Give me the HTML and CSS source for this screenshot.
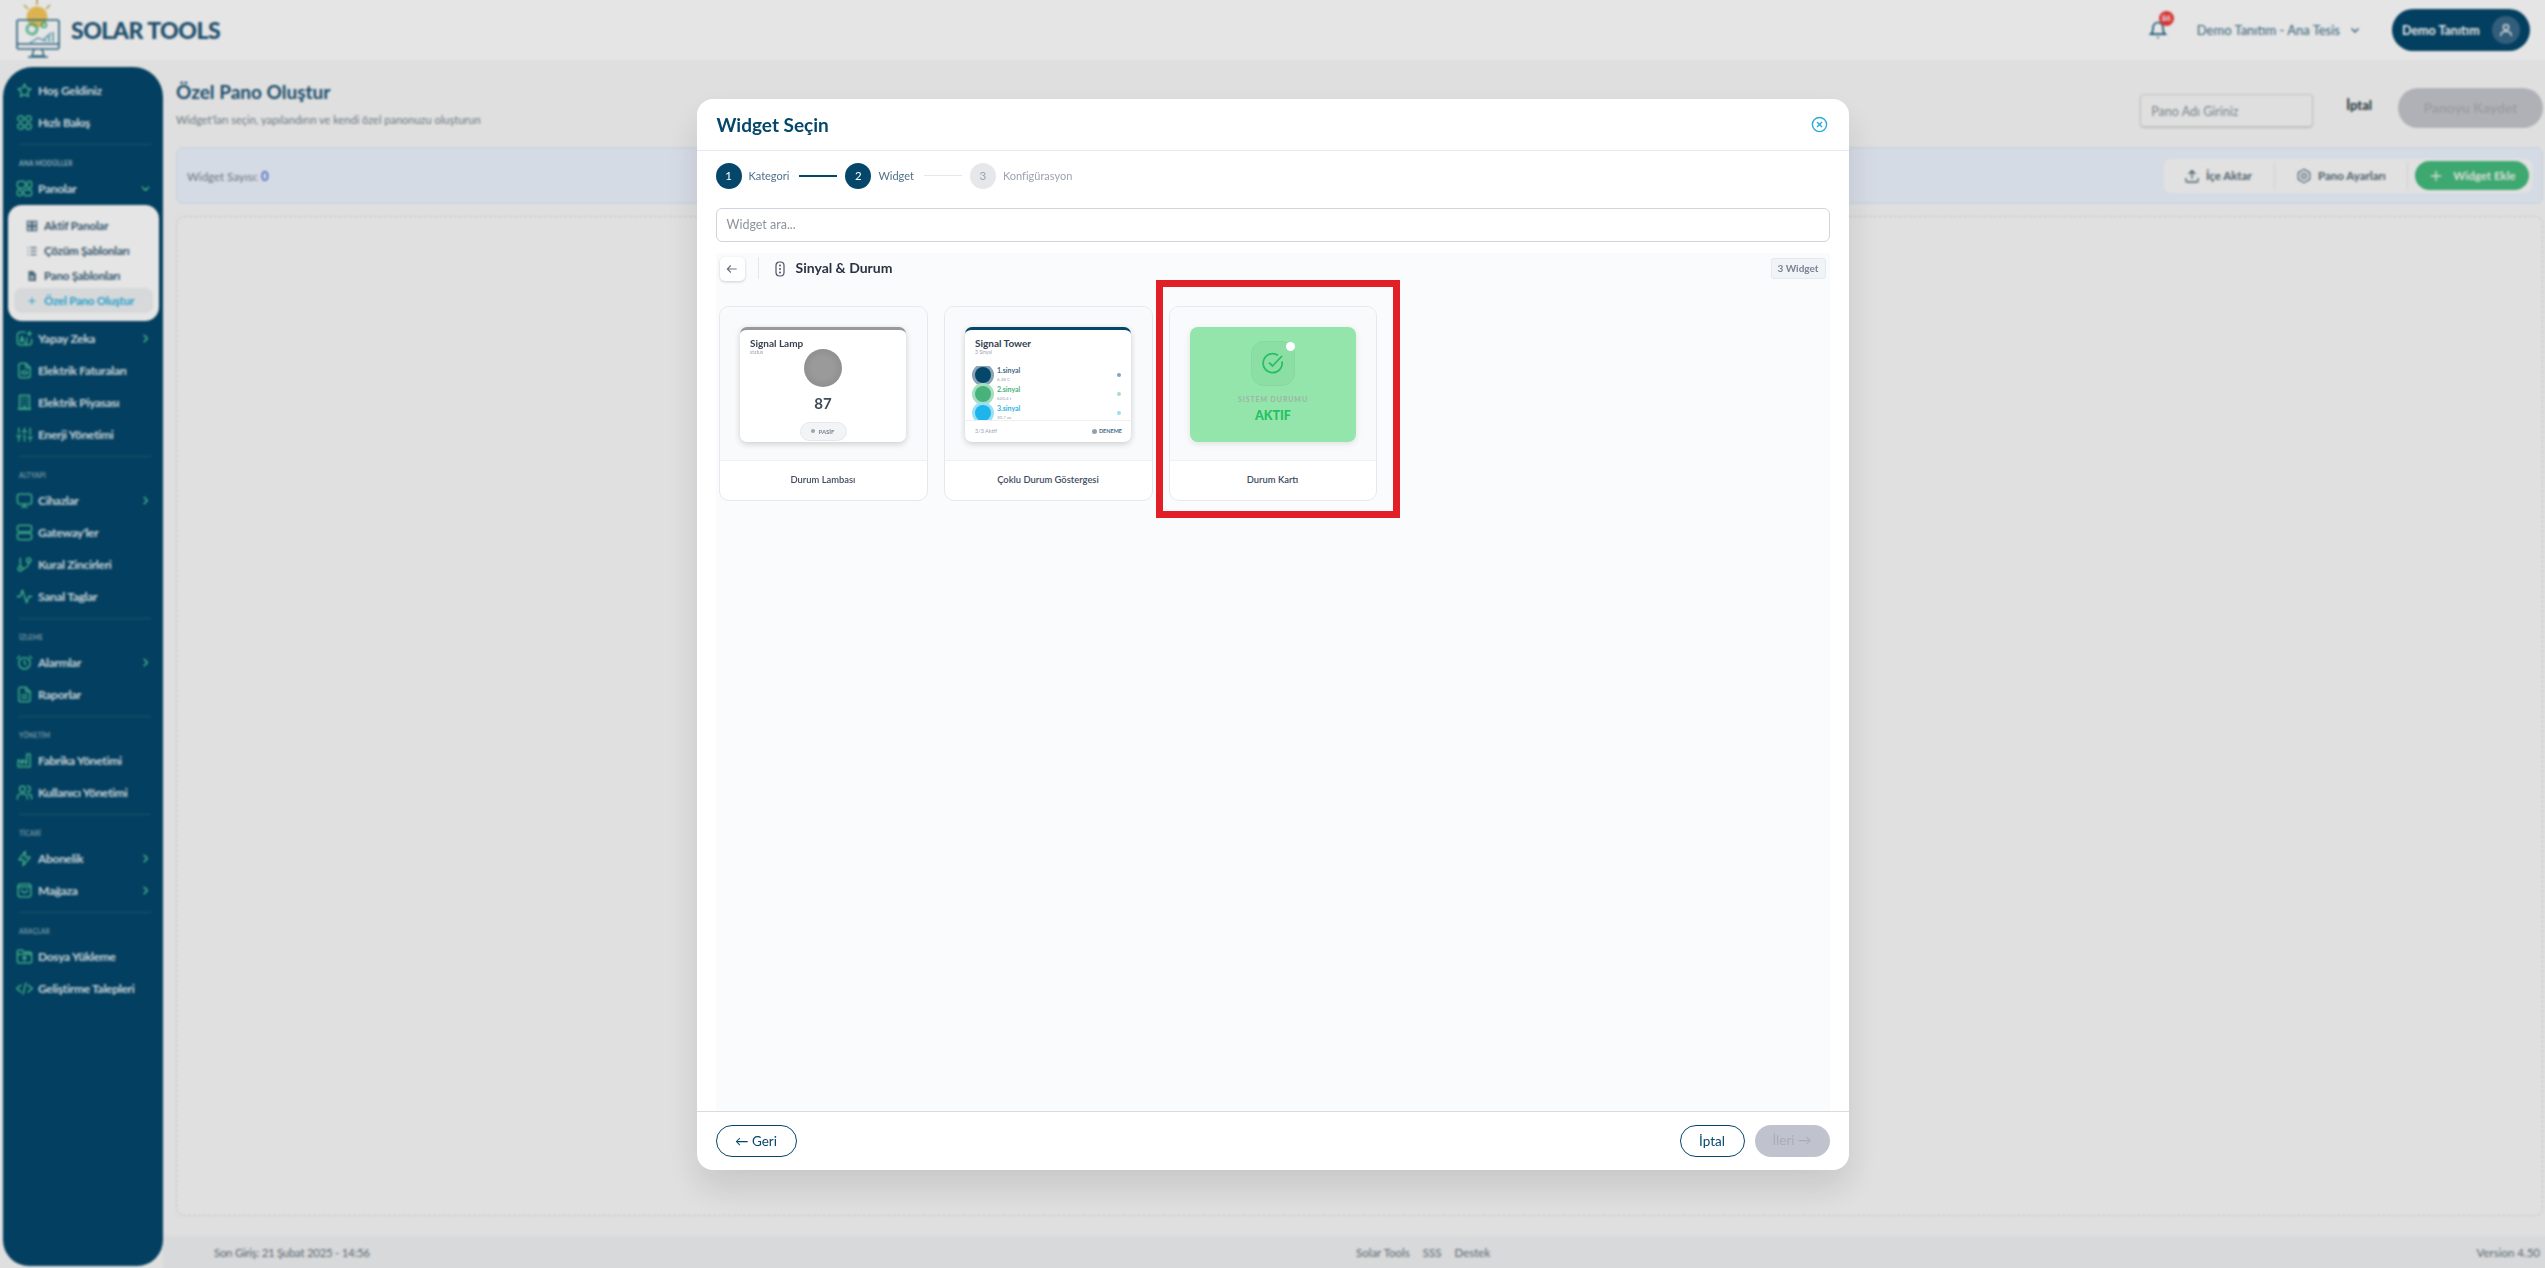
FILE: index.html
```html
<!DOCTYPE html>
<html lang="tr">
<head>
    <meta charset="UTF-8">
    <meta name="viewport" content="width=device-width, initial-scale=1.0">
    <title>Solar Tools - Özel Pano Oluştur</title>
    <link rel="stylesheet" href="styles.css">
</head>
<body>
    <header class="topbar">
        <div class="brand">
            <svg class="brand-logo" viewBox="0 0 64 60" fill="none">
                <g stroke="#c9a84a" stroke-width="1.4"><path d="M37 0v5M24 5l4 4M50 5l-4 4"/></g>
                <circle cx="37" cy="17" r="10.5" fill="#f4c95a"/>
                <rect x="17" y="20" width="42" height="29" rx="2" stroke="#2f6f8c" stroke-width="1.6"/>
                <path d="M17 44h42M34 49l-2 7h12l-2-7M28 57h20" stroke="#2f6f8c" stroke-width="1.5"/>
                <circle cx="32" cy="29" r="5" stroke="#3fb58a" stroke-width="3" stroke-dasharray="2 .8"/>
                <circle cx="44" cy="25" r="2.5" stroke="#3fb58a" stroke-width="1.5"/>
                <path d="M30 43l8-5 5 2 8-7" stroke="#5d9ab0" stroke-width="1.3"/>
                <path d="M45 42v-4M49 42v-7M53 42v-10" stroke="#7fb8c9" stroke-width="2"/>
            </svg>
            <span class="brand-name">SOLAR TOOLS</span>
        </div>
        <div class="topbar-right">
            <div class="bell">
                <svg class="ico-18" viewBox="0 0 24 24" fill="none" stroke="currentColor" stroke-width="2"><path d="M6 9a6 6 0 0 1 12 0c0 6 2.5 8 2.5 8h-17S6 15 6 9z"/><path d="M11 21h2"/></svg>
                <span class="bell-badge">86</span>
            </div>
            <div class="plant">Demo Tanıtım - Ana Tesis
                <svg class="ico-12" viewBox="0 0 24 24" fill="none" stroke="currentColor" stroke-width="3"><path d="M5 9l7 7 7-7"/></svg>
            </div>
            <div class="user">
                <span>Demo Tanıtım</span>
                <span class="user-avatar"><svg class="ico-16" viewBox="0 0 24 24" fill="none" stroke="currentColor" stroke-width="2"><circle cx="12" cy="8" r="4"/><path d="M4 21c0-5 3-7 8-7s8 2 8 7"/></svg></span>
            </div>
        </div>
    </header>

    <div class="layout">
        <aside class="sidebar">
            <a class="nav-item"><svg viewBox="0 0 24 24"><path d="M12 3l2.800 5.800 6.200.9-4.500 4.400 1.100 6.300L12 17.500l-5.600 2.900 1.100-6.300L3 9.700l6.200-.9z"/></svg>Hoş Geldiniz</a>
            <a class="nav-item"><svg viewBox="0 0 24 24"><circle cx="6.5" cy="6.5" r="4"/><circle cx="17.5" cy="6.5" r="4"/><circle cx="6.5" cy="17.5" r="4"/><circle cx="17.5" cy="17.5" r="4"/></svg>Hızlı Bakış</a>

            <div class="nav-label nav-label-strong">ANA MODÜLLER</div>
            <a class="nav-item"><svg viewBox="0 0 24 24"><rect x="2" y="2" width="11" height="9" rx="2"/><rect x="16" y="2" width="6" height="9" rx="2"/><rect x="2" y="14" width="6" height="8" rx="2"/><rect x="11" y="14" width="11" height="8" rx="2"/></svg>Panolar<svg class="nav-arrow" viewBox="0 0 24 24"><path d="M5 9l7 7 7-7"/></svg></a>
            <div class="subnav">
                <a class="subnav-item"><svg viewBox="0 0 24 24" fill="none" stroke="currentColor" stroke-width="3"><path d="M3 3h8v8H3zM13 3h8v8h-8zM3 13h8v8H3zM13 13h8v8h-8z"/></svg>Aktif Panolar</a>
                <a class="subnav-item"><svg viewBox="0 0 24 24" fill="none" stroke="currentColor" stroke-width="2.5"><path d="M3 5h2M9 5h12M3 12h2M9 12h12M3 19h2M9 19h12"/></svg>Çözüm Şablonları</a>
                <a class="subnav-item"><svg viewBox="0 0 24 24" fill="currentColor"><path d="M5 2h9l6 6v14H5zM8 12v2h8v-2zM8 16v2h8v-2z"/></svg>Pano Şablonları</a>
                <a class="subnav-item subnav-active"><svg viewBox="0 0 24 24" fill="none" stroke="currentColor" stroke-width="2"><path d="M12 5v14M5 12h14"/></svg>Özel Pano Oluştur</a>
            </div>
            <a class="nav-item"><svg viewBox="0 0 24 24"><path d="M13 3H6a4 4 0 0 0-4 4v10a4 4 0 0 0 4 4h12a4 4 0 0 0 4-4v-4"/><path d="M6 17l2.500-8 2.500 8M7 14.500h3M15 11v6c0 2-1 2.500-2 2.500"/><path d="M19 2v6M16 5h6"/></svg>Yapay Zeka<svg class="nav-arrow" viewBox="0 0 24 24"><path d="M9 5l7 7-7 7"/></svg></a>
            <a class="nav-item"><svg viewBox="0 0 24 24"><path d="M14 2H7a3 3 0 0 0-3 3v14a3 3 0 0 0 3 3h10a3 3 0 0 0 3-3V8z"/><path d="M14 2v6h6"/><rect x="8" y="13" width="8" height="4" rx="2"/></svg>Elektrik Faturaları</a>
            <a class="nav-item"><svg viewBox="0 0 24 24"><rect x="5" y="2" width="14" height="19"/><path d="M3 21h18M9 6h1M14 6h1M9 10h1M14 10h1M9 14h1M14 14h1M10 18h4"/></svg>Elektrik Piyasası</a>
            <a class="nav-item"><svg viewBox="0 0 24 24"><path d="M4 21v-7M4 10V3M12 21v-9M12 8V3M20 21v-5M20 12V3M1 14h6M9 8h6M17 16h6"/></svg>Enerji Yönetimi</a>

            <div class="nav-label">ALTYAPI</div>
            <a class="nav-item"><svg viewBox="0 0 24 24"><rect x="2" y="3" width="20" height="14" rx="3"/><path d="M12 17v4M8 21h8"/></svg>Cihazlar<svg class="nav-arrow" viewBox="0 0 24 24"><path d="M9 5l7 7-7 7"/></svg></a>
            <a class="nav-item"><svg viewBox="0 0 24 24"><rect x="2" y="2" width="20" height="9" rx="3"/><rect x="2" y="13" width="20" height="9" rx="3"/></svg>Gateway'ler</a>
            <a class="nav-item"><svg viewBox="0 0 24 24"><circle cx="18" cy="6" r="3"/><circle cx="6" cy="18" r="3"/><path d="M6 3v12M18 9a9 9 0 0 1-9 9"/></svg>Kural Zincirleri</a>
            <a class="nav-item"><svg viewBox="0 0 24 24"><path d="M2 12h4l3-9 6 18 3-9h4"/></svg>Sanal Taglar</a>

            <div class="nav-label">İZLEME</div>
            <a class="nav-item"><svg viewBox="0 0 24 24"><circle cx="12" cy="13" r="8"/><path d="M12 9v4l2 2M5 3L2 6M22 6l-3-3"/></svg>Alarmlar<svg class="nav-arrow" viewBox="0 0 24 24"><path d="M9 5l7 7-7 7"/></svg></a>
            <a class="nav-item"><svg viewBox="0 0 24 24"><path d="M14 2H6a2 2 0 0 0-2 2v16a2 2 0 0 0 2 2h12a2 2 0 0 0 2-2V8z"/><path d="M14 2v6h6M8 13h8M8 17h8"/></svg>Raporlar</a>

            <div class="nav-label">YÖNETİM</div>
            <a class="nav-item"><svg viewBox="0 0 24 24"><path d="M3 21V11l6 4v-4l6 4V3h5v18zM7 17h2M13 17h2"/></svg>Fabrika Yönetimi</a>
            <a class="nav-item"><svg viewBox="0 0 24 24"><circle cx="9" cy="7" r="4"/><path d="M2 21v-2a5 5 0 0 1 5-5h4a5 5 0 0 1 5 5v2M16 3a4 4 0 0 1 0 8M22 21v-2a5 5 0 0 0-4-5"/></svg>Kullanıcı Yönetimi</a>

            <div class="nav-label">TİCARİ</div>
            <a class="nav-item"><svg viewBox="0 0 24 24"><path d="M13 2L4 14h7l-1 8 10-12h-7z"/></svg>Abonelik<svg class="nav-arrow" viewBox="0 0 24 24"><path d="M9 5l7 7-7 7"/></svg></a>
            <a class="nav-item"><svg viewBox="0 0 24 24"><rect x="3" y="3" width="18" height="18" rx="3"/><path d="M3 7h18M8 11a4 4 0 0 0 8 0"/></svg>Mağaza<svg class="nav-arrow" viewBox="0 0 24 24"><path d="M9 5l7 7-7 7"/></svg></a>

            <div class="nav-label">ARAÇLAR</div>
            <a class="nav-item"><svg viewBox="0 0 24 24"><path d="M2 19V5a2 2 0 0 1 2-2h5l2 3h9a2 2 0 0 1 2 2v11a2 2 0 0 1-2 2H4a2 2 0 0 1-2-2zM2 9h20M12 18v-6M9.500 14.500L12 12l2.500 2.500"/></svg>Dosya Yükleme</a>
            <a class="nav-item"><svg viewBox="0 0 24 24"><path d="M7 7l-6 5 6 5M17 7l6 5-6 5M14 4l-4 16"/></svg>Geliştirme Talepleri</a>
        </aside>

        <div class="content">
            <main class="page">
                <div class="page-head">
                    <div>
                        <h1>Özel Pano Oluştur</h1>
                        <p>Widget'ları seçin, yapılandırın ve kendi özel panonuzu oluşturun</p>
                    </div>
                    <div class="page-actions">
                        <div class="name-input">Pano Adı Giriniz</div>
                        <span class="link-cancel">İptal</span>
                        <span class="save-btn">Panoyu Kaydet</span>
                    </div>
                </div>
                <div class="band">
                    <div class="band-count">Widget Sayısı: <b>0</b></div>
                    <div class="toolbar">
                        <span class="tool"><svg class="ico-16" viewBox="0 0 24 24" fill="none" stroke="currentColor" stroke-width="2"><path d="M12 16V4M7 9l5-5 5 5M3 15v4a2 2 0 0 0 2 2h14a2 2 0 0 0 2-2v-4"/></svg>İçe Aktar</span>
                        <span class="tool tool-sep"><svg class="ico-16" viewBox="0 0 24 24" fill="none" stroke="currentColor" stroke-width="1.8"><path d="M12 2l8.500 5v10L12 22l-8.500-5V7z"/><circle cx="12" cy="12" r="3.5"/></svg>Pano Ayarları</span>
                        <span class="add-btn"><svg class="ico-16" viewBox="0 0 24 24" fill="none" stroke="currentColor" stroke-width="2"><path d="M12 4v16M4 12h16"/></svg>Widget Ekle</span>
                    </div>
                </div>
                <div class="canvas"></div>
            </main>
            <footer class="statusbar">
                <span class="status-date">Son Giriş: 21 Şubat 2025 - 14:56</span>
                <span class="status-links"><span>Solar Tools</span><span>SSS</span><span>Destek</span></span>
                <span>Version 4.50</span>
            </footer>
        </div>
    </div>

    <div class="overlay">
        <section class="modal">
            <div class="modal-head">
                <h2>Widget Seçin</h2>
                <svg class="modal-close" viewBox="0 0 24 24" fill="none" stroke="currentColor" stroke-width="2"><circle cx="12" cy="12" r="10"/><path d="M8.500 8.500l7 7M15.500 8.500l-7 7"/></svg>
            </div>
            <div class="modal-body">
                <div class="steps">
                    <span class="step-num">1</span><span class="step-text">Kategori</span><span class="step-line step-line-done"></span>
                    <span class="step-num">2</span><span class="step-text">Widget</span><span class="step-line"></span>
                    <span class="step-num step-num-off">3</span><span class="step-text step-text-off">Konfigürasyon</span>
                </div>
                <div class="search">Widget ara...</div>
                <div class="panel">
                    <div class="panel-head">
                        <span class="back-btn"><svg class="ico-14" viewBox="0 0 24 24" fill="none" stroke="currentColor" stroke-width="2"><path d="M20 12H4M10 6l-6 6 6 6"/></svg></span>
                        <span class="panel-sep"></span>
                        <svg class="panel-ico" viewBox="0 0 10 16" fill="none"><rect x="1" y="1" width="8" height="14" rx="3.5" stroke="currentColor" stroke-width="1.2"/><circle cx="5" cy="4.5" r="1" fill="currentColor"/><circle cx="5" cy="8" r="1" fill="currentColor"/><circle cx="5" cy="11.5" r="1" fill="currentColor"/></svg>
                        <h3>Sinyal &amp; Durum</h3>
                        <span class="panel-badge">3 Widget</span>
                    </div>
                    <div class="widget-grid">
                        <article class="widget-card">
                            <div class="widget-thumb">
                                <div class="lamp">
                                    <div class="prev-title">Signal Lamp</div>
                                    <div class="prev-sub">status</div>
                                    <div class="lamp-circle"></div>
                                    <div class="lamp-value">87</div>
                                    <div class="lamp-pill"><i></i>PASİF</div>
                                </div>
                            </div>
                            <div class="widget-name">Durum Lambası</div>
                        </article>
                        <article class="widget-card">
                            <div class="widget-thumb">
                                <div class="tower">
                                    <div class="prev-title">Signal Tower</div>
                                    <div class="prev-sub">3 Sinyal</div>
                                    <div class="tower-rows">
                                        <div class="tower-row tone-navy"><i class="tower-light"></i><div><b>1.sinyal</b><small>6.28 C</small></div><i class="tower-dot"></i></div>
                                        <div class="tower-row tone-green"><i class="tower-light"></i><div><b>2.sinyal</b><small>620.4 t</small></div><i class="tower-dot"></i></div>
                                        <div class="tower-row tone-blue"><i class="tower-light"></i><div><b>3.sinyal</b><small>20.7 oc</small></div><i class="tower-dot"></i></div>
                                    </div>
                                    <div class="tower-foot"><span>3/3 Aktif</span><span class="tower-tag"><i></i>DENEME</span></div>
                                </div>
                            </div>
                            <div class="widget-name">Çoklu Durum Göstergesi</div>
                        </article>
                        <article class="widget-card">
                            <div class="widget-thumb">
                                <div class="status-card">
                                    <div class="status-icon">
                                        <svg viewBox="0 0 24 24" fill="none" stroke="currentColor" stroke-width="1.8"><path d="M21 10.500a9.500 9.500 0 1 1-4-6.200"/><path d="M8 11.500l3.500 3.500L21 5"/></svg>
                                        <i></i>
                                    </div>
                                    <div class="status-label">SISTEM DURUMU</div>
                                    <div class="status-value">AKTIF</div>
                                </div>
                            </div>
                            <div class="widget-name">Durum Kartı</div>
                            <span class="red-mark"></span>
                        </article>
                    </div>
                </div>
            </div>
            <div class="modal-foot">
                <span class="btn-outline btn-back">← Geri</span>
                <span class="foot-right">
                    <span class="btn-outline btn-cancel">İptal</span>
                    <span class="btn-disabled">İleri →</span>
                </span>
            </div>
        </section>
    </div>
</body>
</html>
```

FILE: styles.css
```css
* {
    box-sizing: border-box;
}

html, body {
    height: 100%;
}

body {
    margin: 0;
    overflow: hidden;
    font-family: "Lato", "Noto Sans", sans-serif;
    background-color: #f9f9f9;
    color: #1f3a4d;
}

h1, h2, h3, p {
    margin: 0;
}

.ico-12 { width: 12px; height: 12px; }
.ico-14 { width: 14px; height: 14px; }
.ico-16 { width: 16px; height: 16px; }
.ico-18 { width: 20px; height: 20px; }

/* barra superior */
.topbar {
    height: 60px;
    background-color: #fff;
    display: flex;
    justify-content: space-between;
    align-items: center;
    padding-right: 15px;
}

.brand {
    display: flex;
    align-items: center;
    gap: 7px;
}

.brand-logo {
    width: 64px;
    height: 60px;
}

.brand-name {
    font-size: 23px;
    font-weight: 900;
    color: #1f5778;
    letter-spacing: -0.5px;
}

.topbar-right {
    display: flex;
    align-items: center;
}

.bell {
    position: relative;
    display: flex;
    color: #1d5f80;
    margin-right: 29px;
}

.bell-badge {
    position: absolute;
    top: -9px;
    right: -6px;
    width: 15px;
    height: 15px;
    border-radius: 50%;
    background-color: #ef3b3b;
    color: #fff;
    font-size: 8px;
    font-weight: 700;
    text-align: center;
    line-height: 15px;
}

.plant {
    display: flex;
    align-items: center;
    gap: 9px;
    font-size: 13px;
    color: #3d6f88;
    margin-right: 31px;
}

.user {
    width: 138px;
    height: 42px;
    border-radius: 21px;
    background-color: #04476b;
    color: #fff;
    font-size: 12.5px;
    font-weight: 700;
    display: flex;
    align-items: center;
    justify-content: space-between;
    padding: 0 10px;
}

.user-avatar {
    width: 28px;
    height: 28px;
    border-radius: 50%;
    background-color: #39698a;
    display: flex;
    align-items: center;
    justify-content: center;
}

/* estrutura */
.layout {
    height: 1208px;
    display: flex;
}

.sidebar {
    width: 160px;
    height: 1199px;
    margin: 7px 0 0 3px;
    padding-top: 7px;
    background-color: #04476b;
    border-radius: 30px 30px 26px 26px;
    flex-shrink: 0;
}

.nav-item {
    height: 32px;
    display: flex;
    align-items: center;
    padding-left: 13px;
    padding-right: 12px;
    font-size: 12px;
    font-weight: 700;
    letter-spacing: -0.3px;
    color: #dfe8ee;
}

.nav-item svg {
    width: 17px;
    height: 17px;
    margin-right: 5px;
    flex-shrink: 0;
    fill: none;
    stroke: #4fd09c;
    stroke-width: 1.8;
    stroke-linecap: round;
    stroke-linejoin: round;
}

.nav-item .nav-arrow {
    width: 11px;
    height: 11px;
    margin-left: auto;
    margin-right: 0;
    stroke-width: 3;
}

.nav-label {
    height: 28px;
    margin: 6px 12px 0 16px;
    padding-top: 14px;
    border-top: 1px solid #205c7d;
    font-size: 6.5px;
    line-height: 10px;
    font-weight: 700;
    color: #7fa7ba;
    letter-spacing: 0.2px;
}

.nav-label-strong {
    color: #9fc0cf;
}

.subnav {
    width: 151px;
    height: 116px;
    margin: 1px 0 1px 5px;
    padding: 8px 6px;
    background-color: #fff;
    border-radius: 14px;
}

.subnav-item {
    height: 25px;
    display: flex;
    align-items: center;
    padding-left: 12px;
    border-radius: 8px;
    font-size: 11.5px;
    font-weight: 700;
    letter-spacing: -0.2px;
    color: #3d6379;
}

.subnav-item svg {
    width: 12px;
    height: 12px;
    margin-right: 6px;
    color: #56778b;
}

.subnav-active {
    background-color: #f0f1f3;
    color: #2db4e2;
}

.subnav-active svg {
    color: #2db4e2;
}

.content {
    flex: 1;
    display: flex;
    flex-direction: column;
    min-width: 0;
}

.page {
    flex: 1;
    padding: 17px 2px 0 13px;
}

.page-head {
    height: 70px;
    display: flex;
    justify-content: space-between;
}

.page-head h1 {
    font-size: 19px;
    font-weight: 700;
    color: #1c5577;
    line-height: 30px;
}

.page-head p {
    font-size: 11px;
    color: #7a8a94;
    margin-top: 6px;
}

.page-actions {
    display: flex;
    align-items: flex-start;
    margin-top: 11px;
}

.name-input {
    width: 173px;
    height: 33px;
    margin-top: 6px;
    margin-right: 33px;
    padding: 9px 10px;
    font-size: 12.5px;
    color: #8b949b;
    border: 1px solid #d4d6d8;
    border-radius: 4px;
    box-shadow: 0 1px 2px rgba(0, 0, 0, 0.15);
}

.link-cancel {
    font-size: 13px;
    font-weight: 700;
    color: #25353f;
    margin-top: 9px;
    margin-right: 26px;
}

.save-btn {
    width: 145px;
    height: 40px;
    border-radius: 20px;
    background-color: #c4c6cc;
    color: #aeb0b7;
    font-size: 14px;
    font-weight: 700;
    text-align: center;
    line-height: 40px;
}

.band {
    height: 57px;
    background-color: #eef4ff;
    border: 1px solid #dce8f7;
    border-radius: 7px;
    display: flex;
    justify-content: space-between;
    align-items: center;
    padding: 0 10px;
}

.band-count {
    font-size: 11.5px;
    color: #7a8790;
}

.band-count b {
    color: #5a78d8;
    font-size: 13px;
}

.toolbar {
    width: 368px;
    height: 34px;
    background-color: #fbfbfb;
    border-radius: 7px;
    display: flex;
    align-items: center;
    padding: 0 3px 0 20px;
    font-size: 11.5px;
    font-weight: 700;
    color: #566b78;
}

.tool {
    display: flex;
    align-items: center;
    gap: 6px;
    width: 90px;
    flex-shrink: 0;
}

.tool svg {
    flex-shrink: 0;
}

.tool-sep {
    width: 134px;
    height: 28px;
    padding-left: 21px;
    border-left: 1px solid #e7e7e7;
    border-right: 1px solid #e7e7e7;
}

.add-btn {
    width: 114px;
    height: 29px;
    margin-left: 7px;
    flex-shrink: 0;
    border-radius: 15px;
    background-color: #45bb7c;
    color: #f2f7f3;
    display: flex;
    align-items: center;
    justify-content: center;
    gap: 9px;
}

.canvas {
    height: 1000px;
    margin-top: 12px;
    border: 1px dashed #d6d6d6;
    border-radius: 8px;
    background-color: #fafafa;
}

.statusbar {
    height: 32px;
    background-color: #f1f2f3;
    display: flex;
    justify-content: space-between;
    align-items: center;
    padding: 0 5px 0 51px;
    font-size: 11.5px;
    color: #65757f;
}

.status-date {
    letter-spacing: -0.3px;
}

.status-links {
    display: flex;
    gap: 13px;
}

/* modal */
.overlay {
    position: fixed;
    inset: 0;
    background-color: rgba(0, 0, 0, 0.1);
    backdrop-filter: blur(1px);
    display: flex;
    align-items: center;
    justify-content: center;
}

.modal {
    width: 1152px;
    height: 1071px;
    background-color: #fff;
    border-radius: 16px;
    box-shadow: 0 18px 36px rgba(0, 0, 0, 0.12);
    display: flex;
    flex-direction: column;
    color: #04476b;
}

.modal-head {
    height: 52px;
    padding: 0 21px 0 20px;
    border-bottom: 1px solid #e4eaee;
    display: flex;
    align-items: center;
    justify-content: space-between;
    flex-shrink: 0;
}

.modal-head h2 {
    font-size: 19px;
    font-weight: 700;
}

.modal-close {
    width: 17px;
    height: 17px;
    color: #2aabdc;
}

.modal-body {
    flex: 1;
    padding: 0 19px;
    display: flex;
    flex-direction: column;
    min-height: 0;
}

.steps {
    height: 50px;
    margin-bottom: 7px;
    flex-shrink: 0;
    display: flex;
    align-items: center;
    font-size: 11px;
}

.step-num {
    width: 26px;
    height: 26px;
    border-radius: 50%;
    background-color: #04476b;
    color: #fff;
    font-size: 11.5px;
    text-align: center;
    line-height: 26px;
}

.step-num-off {
    background-color: #e5e7eb;
    color: #9ca3af;
}

.step-text {
    margin-left: 7px;
    color: #4e718a;
}

.step-text-off {
    color: #9ca3af;
}

.step-line {
    width: 38px;
    height: 1px;
    margin: 0 8px 0 10px;
    background-color: #e5e7eb;
}

.step-line-done {
    height: 2px;
    background-color: #04476b;
}

.search {
    height: 34px;
    flex-shrink: 0;
    border: 1px solid #d1d5db;
    border-radius: 6px;
    padding-left: 10px;
    font-size: 12.5px;
    line-height: 32px;
    color: #8d949c;
}

.panel {
    flex: 1;
    margin-top: 11px;
    padding: 3px 3px 0;
    background-color: #f9fbfd;
}

.panel-head {
    height: 50px;
    display: flex;
    align-items: flex-start;
    padding-top: 1px;
}

.back-btn {
    width: 25px;
    height: 24px;
    margin-left: 1px;
    background-color: #fff;
    border-radius: 5px;
    box-shadow: 0 1px 3px rgba(0, 0, 0, 0.18);
    display: flex;
    align-items: center;
    justify-content: center;
    color: #6b7280;
}

.panel-sep {
    width: 1px;
    height: 22px;
    margin: 0 16px 0 13px;
    background-color: #e5e7eb;
}

.panel-ico {
    width: 10px;
    height: 16px;
    margin-top: 4px;
    color: #4b5563;
}

.panel-head h3 {
    font-size: 14px;
    font-weight: 700;
    color: #2b3242;
    margin-left: 11px;
    line-height: 22px;
}

.panel-badge {
    margin-left: auto;
    margin-top: 1px;
    margin-right: 1px;
    width: 55px;
    height: 21px;
    background-color: #f1f4f7;
    border: 1px solid #e5e8ec;
    border-radius: 3px;
    font-size: 10px;
    font-weight: 700;
    text-align: center;
    line-height: 19px;
    color: #7a8294;
}

.widget-grid {
    display: grid;
    grid-template-columns: 209px 209px 208px;
    gap: 16px;
}

.widget-card {
    position: relative;
    height: 195px;
    background-color: #fff;
    border: 1px solid #e5e8ec;
    border-radius: 10px;
}

.widget-thumb {
    height: 154px;
    background-color: #f8fafc;
    border-bottom: 1px solid #eef1f4;
    border-radius: 10px 10px 0 0;
    padding: 20px 0 0 20.5px;
}

.widget-name {
    height: 39px;
    font-size: 9.4px;
    font-weight: 600;
    color: #414b5f;
    text-align: center;
    line-height: 38px;
}

.red-mark {
    position: absolute;
    top: -27px;
    left: -14px;
    right: -24px;
    bottom: -18px;
    border: 7px solid #e21f26;
}

.prev-title {
    font-size: 10px;
    font-weight: 700;
    color: #374151;
    line-height: 12px;
}

.prev-sub {
    font-size: 5px;
    color: #9ca3af;
    line-height: 7px;
}

/* previa: lampada */
.lamp,
.tower {
    width: 166px;
    height: 115px;
    background-color: #fff;
    border-radius: 7px;
    box-shadow: 0 2px 6px rgba(0, 0, 0, 0.18);
    position: relative;
    overflow: hidden;
}

.lamp {
    border-top: 3px solid #999;
    padding: 7px 10px 0;
}

.lamp-circle {
    width: 38px;
    height: 38px;
    margin: -7px auto 0;
    border-radius: 50%;
    background: radial-gradient(circle, #9a9a9a 40%, #858585 100%);
}

.lamp-value {
    font-size: 15px;
    font-weight: 700;
    color: #414a58;
    text-align: center;
    margin-top: 7px;
    line-height: 18px;
}

.lamp-pill {
    width: 47px;
    height: 19px;
    margin: 10px auto 0;
    background-color: #f3f4f6;
    border: 1px solid #e5e7eb;
    border-radius: 10px;
    font-size: 6px;
    font-weight: 700;
    color: #7b8494;
    display: flex;
    align-items: center;
    justify-content: center;
    gap: 3px;
}

.lamp-pill i {
    width: 4px;
    height: 4px;
    border-radius: 50%;
    background-color: #9ca3af;
}

/* previa: torre */
.tower {
    border-top: 3px solid #04476b;
    padding: 7px 0 0;
}

.tower .prev-title,
.tower .prev-sub {
    padding-left: 10px;
}

.tower-rows {
    height: 54px;
    margin-top: 10px;
    overflow: hidden;
}

.tower-row {
    height: 19px;
    display: flex;
    align-items: center;
    padding: 0 10px;
    font-size: 7px;
    line-height: 9px;
}

.tower-row b {
    display: block;
    font-weight: 700;
    color: var(--text);
}

.tower-row small {
    display: block;
    font-size: 4.5px;
    color: #9ca3af;
}

.tower-light {
    width: 16px;
    height: 16px;
    border-radius: 50%;
    margin-right: 6px;
    box-shadow: 0 0 0 3px var(--glow);
    background-color: var(--tone);
}

.tower-dot {
    width: 4px;
    height: 4px;
    margin-left: auto;
    border-radius: 50%;
    background-color: var(--glow);
}

.tone-navy { --tone: #04476b; --glow: #8aa3b5; --text: #3f6a86; }
.tone-green { --tone: #48b27c; --glow: #a6dfc0; --text: #48b27c; }
.tone-blue { --tone: #1fb4ea; --glow: #99dff5; --text: #2db4e2; }

.tower-foot {
    height: 22px;
    border-top: 1px solid #eef0f2;
    display: flex;
    justify-content: space-between;
    align-items: center;
    padding: 0 9px 0 10px;
    font-size: 5.5px;
    color: #9ca3af;
}

.tower-tag {
    display: flex;
    align-items: center;
    gap: 2px;
    font-weight: 700;
    color: #3f6a86;
}

.tower-tag i {
    width: 5px;
    height: 5px;
    border-radius: 50%;
    background-color: #8aa3b5;
}

/* previa: cartao de status */
.status-card {
    width: 166px;
    height: 115px;
    background-color: #93e5ab;
    border-radius: 8px;
    box-shadow: 0 2px 6px rgba(0, 0, 0, 0.1);
    display: flex;
    flex-direction: column;
    align-items: center;
    padding-top: 14px;
}

.status-icon {
    position: relative;
    width: 44px;
    height: 45px;
    border-radius: 13px;
    background-color: #8cdfa4;
    border: 1px solid #86d89e;
    display: flex;
    align-items: center;
    justify-content: center;
    color: #25c062;
}

.status-icon svg {
    width: 24px;
    height: 24px;
}

.status-icon i {
    position: absolute;
    top: 0;
    right: -1px;
    width: 9px;
    height: 9px;
    border-radius: 50%;
    background-color: #fff;
}

.status-label {
    margin-top: 9px;
    font-size: 7px;
    font-weight: 700;
    letter-spacing: 0.9px;
    color: #9fb3a8;
    line-height: 9px;
}

.status-value {
    margin-top: 4px;
    font-size: 12.5px;
    font-weight: 900;
    color: #25c062;
    line-height: 16px;
}

.modal-foot {
    height: 59px;
    flex-shrink: 0;
    border-top: 1px solid #d8dbe0;
    display: flex;
    justify-content: space-between;
    padding: 13px 19px 0;
}

.foot-right {
    display: flex;
    gap: 10px;
}

.btn-outline,
.btn-disabled {
    height: 32px;
    border-radius: 16px;
    font-size: 13.5px;
    text-align: center;
    line-height: 30px;
}

.btn-outline {
    border: 1px solid #04476b;
    color: #04476b;
}

.btn-back {
    width: 81px;
}

.btn-cancel {
    width: 65px;
}

.btn-disabled {
    width: 75px;
    background-color: #c0c3cd;
    color: #a9adb9;
}
```
